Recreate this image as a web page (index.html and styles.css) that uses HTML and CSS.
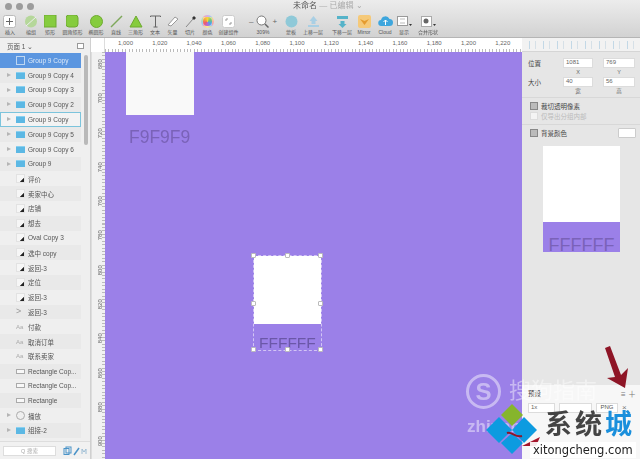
FILE: index.html
```html
<!DOCTYPE html>
<html lang="zh">
<head>
  <meta charset="UTF-8" />
  <title>未命名 — 已编辑</title>
  <link rel="stylesheet" href="styles.css">
</head>
<body>
<div class="app">

  <header class="toolbar">
    <div class="titlebar">
      <div class="lights"><span></span><span></span><span></span></div>
      <div class="doc-title">未命名 <span>— 已编辑 ⌄</span></div>
    </div>
    <div class="tools">
      <div class="tool w-insert"><svg width="15" height="13"><rect x=".5" y=".5" width="12" height="12" rx="2" fill="#fff" stroke="#bbb"/><path d="M6.500 3v7M3 6.500h7" stroke="#666"/></svg><label>插入</label></div>
      <div class="tool w-union"><svg width="14" height="13"><circle cx="7" cy="6.500" r="6" fill="#b5d79a"/><path d="M2 11L12 2" stroke="#eee"/></svg><label>编组</label></div>
      <div class="tool w-rect"><svg width="13" height="13"><rect width="12" height="12" fill="#86cc3e" stroke="#6eaa30"/></svg><label>矩形</label></div>
      <div class="tool w-round"><svg width="13" height="13"><rect width="12" height="12" rx="3" fill="#86cc3e" stroke="#6eaa30"/></svg><label>圆角矩形</label></div>
      <div class="tool w-oval"><svg width="13" height="13"><circle cx="6.500" cy="6.500" r="6" fill="#86cc3e" stroke="#6eaa30"/></svg><label>椭圆形</label></div>
      <div class="tool w-line"><svg width="13" height="13"><path d="M1 12L12 1" stroke="#7ea85a" stroke-width="1.500"/></svg><label>直线</label></div>
      <div class="tool w-tri"><svg width="14" height="13"><path d="M7 1l6 11H1z" fill="#86cc3e" stroke="#6eaa30"/></svg><label>三角形</label></div>
      <div class="tool w-text"><svg width="13" height="13"><path d="M1.500 2V1h10v1M6.500 1v11M4.500 12h4" fill="none" stroke="#666"/></svg><label>文本</label></div>
      <div class="tool w-vec"><svg width="13" height="13"><path d="M2 10L9 2l3 2-7 7z" fill="#fff" stroke="#999"/></svg><label>矢量</label></div>
      <div class="tool w-slice"><svg width="13" height="13"><path d="M2 12L9 4" stroke="#888"/><path d="M8 3l2-2 2 2-2 2z" fill="#333"/></svg><label>切片</label></div>
      <div class="tool w-color"><div class="wheel"></div><label>颜色</label></div>
      <div class="tool w-comp"><svg width="13" height="13"><rect x=".5" y=".5" width="12" height="12" rx="2" fill="#fff" stroke="#ccc"/><path d="M4 4h2M7 9h2M9 7v2M4 4v2" stroke="#999"/></svg><label>创建组件</label></div>
      <div class="tool w-zoom"><div class="zoom-row"><span>–</span><svg width="13" height="13"><circle cx="5.500" cy="5.500" r="4.500" fill="#fff" stroke="#777"/><path d="M9 9l3.500 3.500" stroke="#666" stroke-width="1.500"/></svg><span>+</span></div><label>309%</label></div>
      <div class="tool w-a"><svg width="13" height="13"><circle cx="6.500" cy="6.500" r="6" fill="#8fc9d8"/></svg><label>蒙板</label></div>
      <div class="tool w-b"><svg width="13" height="13"><path d="M6.500 1l4 5H8.500v3h-4V6h-2zM1 10h11v2H1z" fill="#a9cfe4"/></svg><label>上移一层</label></div>
      <div class="tool w-c"><svg width="13" height="13"><path d="M1 1h11v3H1zM4.500 6h4v3h2l-4 4-4-4h2z" fill="#55b3c9"/></svg><label>下移一层</label></div>
      <div class="tool w-d"><svg width="13" height="13"><rect width="13" height="13" rx="2" fill="#f5c979"/><path d="M2 4l4.500 6L11 4l-4.500 2z" fill="#e59b2e"/></svg><label>Mirror</label></div>
      <div class="tool w-e"><svg width="15" height="13"><path d="M3.500 11a3 3 0 0 1-.5-6 4.500 4.500 0 0 1 8.500-1 3.500 3.500 0 0 1 0 7z" fill="#3ea6dd"/><path d="M7.500 5v5M5.500 7l2-2 2 2" fill="none" stroke="#fff"/></svg><label>Cloud</label></div>
      <div class="tool w-f"><svg width="15" height="13"><rect x=".5" y="1.500" width="10" height="9" fill="#fff" stroke="#999"/><path d="M3 4h5M3 8h5" stroke="#bbb"/><path d="M12 9h3l-1.500 2z" fill="#333"/></svg><label>显示</label></div>
      <div class="tool w-g"><svg width="15" height="13"><rect x=".5" y="1.500" width="10" height="10" fill="#fff" stroke="#aaa"/><circle cx="5" cy="6" r="2.500" fill="#666"/><path d="M12 9h3l-1.500 2z" fill="#333"/></svg><label>合并形状</label></div>
    </div>
  </header>

  <div class="main">
    <aside class="layers">
      <div class="page-head"><span>页面 1 ⌄</span><i class="page-btn"></i></div>
      <div class="layer-wrap">
        <ul class="layer-list">
          <li class="row selected"><i class="ic-artboard"></i>Group 9 Copy</li>
          <li class="row alt"><b class="tri"></b><i class="ic-folder"></i>Group 9 Copy 4</li>
          <li class="row"><b class="tri"></b><i class="ic-folder"></i>Group 9 Copy 3</li>
          <li class="row alt"><b class="tri"></b><i class="ic-folder"></i>Group 9 Copy 2</li>
          <li class="row hovered"><b class="tri"></b><i class="ic-folder"></i>Group 9 Copy</li>
          <li class="row alt"><b class="tri"></b><i class="ic-folder"></i>Group 9 Copy 5</li>
          <li class="row"><b class="tri"></b><i class="ic-folder"></i>Group 9 Copy 6</li>
          <li class="row alt"><b class="tri"></b><i class="ic-folder"></i>Group 9</li>
          <li class="row"><i class="ic-shape"></i>评价</li>
          <li class="row alt"><i class="ic-shape"></i>卖家中心</li>
          <li class="row"><i class="ic-shape"></i>店铺</li>
          <li class="row alt"><i class="ic-shape"></i>想去</li>
          <li class="row"><i class="ic-shape"></i>Oval Copy 3</li>
          <li class="row alt"><i class="ic-shape"></i>选中 copy</li>
          <li class="row"><i class="ic-shape"></i>返回-3</li>
          <li class="row alt"><i class="ic-shape"></i>定位</li>
          <li class="row"><i class="ic-shape"></i>返回-3</li>
          <li class="row alt"><i class="ic-chevron">&gt;</i>返回-3</li>
          <li class="row"><i class="ic-aa">Aa</i>付款</li>
          <li class="row alt"><i class="ic-aa">Aa</i>取消订单</li>
          <li class="row"><i class="ic-aa">Aa</i>联系卖家</li>
          <li class="row alt"><i class="ic-rect"></i>Rectangle Cop...</li>
          <li class="row"><i class="ic-rect"></i>Rectangle Cop...</li>
          <li class="row alt"><i class="ic-rect"></i>Rectangle</li>
          <li class="row"><b class="tri"></b><i class="ic-circle"></i>播放</li>
          <li class="row alt"><b class="tri"></b><i class="ic-folder"></i>组接-2</li>
        </ul>
        <div class="scrollbar"></div>
      </div>
      <div class="search-bar">
        <div class="search">Q 搜索</div>
        <svg width="26" height="10"><rect x="1" y="2.500" width="5" height="6" fill="none" stroke="#4a93c8"/><rect x="3" y="1" width="5" height="6" fill="none" stroke="#4a93c8"/><path d="M11 9l5-7" stroke="#4a93c8" stroke-width="1.500"/><path d="M19 8V3l2 3 2-3v5" fill="none" stroke="#9bbcd4"/></svg>
      </div>
    </aside>

    <div class="stage">
      <div class="ruler-h">
        <div class="ruler-corner"></div>
        <div class="ruler-h-labels">
          <span>1,000</span><span>1,020</span><span>1,040</span><span>1,060</span><span>1,080</span><span>1,100</span><span>1,120</span><span>1,140</span><span>1,160</span><span>1,180</span><span>1,200</span><span>1,220</span>
        </div>
      </div>
      <div class="stage-body">
        <div class="ruler-v">
          <span>680</span><span>700</span><span>720</span><span>740</span><span>760</span><span>780</span><span>800</span><span>820</span><span>840</span><span>860</span><span>880</span><span>900</span>
        </div>
        <div class="canvas">
          <div class="swatch swatch-top"></div>
          <div class="swatch-label label-top">F9F9F9</div>
          <div class="selection">
            <div class="swatch-white"></div>
            <div class="swatch-label label-sel">FFFFFF</div>
            <i class="h h1"></i><i class="h h2"></i><i class="h h3"></i><i class="h h4"></i><i class="h h5"></i><i class="h h6"></i><i class="h h7"></i><i class="h h8"></i>
          </div>
        </div>
      </div>
    </div>

    <aside class="inspector">
      <div class="align-bar">
        <i></i><i></i><i></i><i></i><i></i><i></i><i></i><i></i>
      </div>
      <div class="panel-body">
        <div class="prop-grid">
          <label>位置</label><div class="field">1081</div><div class="field">769</div>
          <span></span><small>X</small><small>Y</small>
          <label>大小</label><div class="field">40</div><div class="field">56</div>
          <span></span><small>宽</small><small>高</small>
        </div>
        <div class="check-group">
          <div class="check on">裁切透明像素</div>
          <div class="check off">仅导出分组内部</div>
        </div>
        <div class="bg-row">
          <div class="check on">背景颜色</div>
          <div class="color-chip"></div>
        </div>
        <div class="preview">
          <div class="preview-white"></div>
          <div class="preview-purple">FFFFFF</div>
        </div>
      </div>
      <div class="export">
        <div class="export-head"><span>预设</span><em>≡ ＋</em></div>
        <div class="export-row"><div class="field">1x</div><div class="field"></div><div class="field png">PNG</div><em>×</em></div>
      </div>
    </aside>
  </div>

  <!-- watermarks pasted over the screenshot -->
  <div class="wm-sogou">
    <div class="wm-s">S</div>
    <div class="wm-cn">搜狗指南</div>
    <div class="wm-en">zhinan</div>
  </div>
  <svg class="arrow-red" width="34" height="50" viewBox="0 0 34 50"><path d="M6 5l5-2 11 29 7-7-3 20-18-10 8-1z" fill="#8e1526"/></svg>
  <div class="wm-xt">
    <svg class="wm-logo" width="56" height="50" viewBox="0 0 56 50">
      <path d="M26 0l11 11-11 11-11-11z" fill="#86b52c"/>
      <path d="M13 13l13 13-13 13L0 26z" fill="#0d9be0"/>
      <path d="M38 13l13 13-13 13-12-13z" fill="#0d9be0"/>
      <path d="M26 29l11 10-11 11-11-11z" fill="#0d9be0"/>
      <path d="M21 29c5-2 8 5 15 3" fill="none" stroke="#8e1526" stroke-width="2"/>
      <path d="M36 42l18-9-4 9z" fill="#a5142a"/>
    </svg>
    <div class="wm-name">系统<span>城</span></div>
    <div class="wm-url">xitongcheng.com</div>
  </div>
</div>
</body>
</html>
```
FILE: styles.css
```css
* {
  box-sizing: border-box;
}

html, body {
  margin: 0;
  padding: 0;
  width: 640px;
  height: 459px;
  overflow: hidden;
}

body {
  font-family: "Liberation Sans", "Noto Sans CJK SC", sans-serif;
  color: #444;
  background: #e6e6e6;
}

.app {
  position: relative;
  width: 640px;
  height: 459px;
  display: flex;
  flex-direction: column;
  overflow: hidden;
  filter: blur(0.35px);
}

/* toolbar */
.toolbar {
  height: 38px;
  flex: none;
  background: linear-gradient(#ececec, #d2d2d2);
  border-bottom: 1px solid #b5b5b5;
}

.titlebar {
  height: 15px;
  position: relative;
}

.lights {
  display: flex;
  gap: 4px;
  padding: 3px 0 0 5px;
}
.lights span {
  width: 7px;
  height: 7px;
  border-radius: 50%;
  background: #9c9c9c;
}

.doc-title {
  position: absolute;
  left: 293px;
  top: 1px;
  font-size: 8px;
  line-height: 10px;
  color: #555;
}
.doc-title span {
  color: #aaa;
}

.tools {
  display: flex;
  align-items: flex-start;
  height: 22px;
  padding-left: 3px;
}

.tool {
  flex: none;
  display: flex;
  flex-direction: column;
  align-items: center;
  height: 22px;
}
.tool svg {
  display: block;
}
.tool label {
  font-size: 5px;
  line-height: 8px;
  margin-top: 0;
  color: #555;
  white-space: nowrap;
}

.w-insert { width: 19px; align-items: flex-start; }
.w-insert label { margin-left: 2px; }
.w-union { width: 18px; }
.w-rect { width: 20px; }
.w-round { width: 25px; }
.w-oval { width: 22px; }
.w-line { width: 18px; }
.w-tri { width: 21px; }
.w-text { width: 18px; }
.w-vec { width: 17px; }
.w-slice { width: 18px; }
.w-color { width: 17px; }
.w-comp { width: 25px; }
.w-zoom { width: 44px; }
.w-a { width: 12px; }
.w-b { width: 32px; }
.w-c { width: 26px; }
.w-d { width: 18px; }
.w-e { width: 24px; }
.w-f { width: 14px; }
.w-g { width: 34px; }

.wheel {
  width: 13px;
  height: 13px;
  border-radius: 50%;
  background: conic-gradient(#f5d33c, #7bc96a, #4aa5e8, #b06ad8, #ec5a6e, #f5a03c, #f5d33c);
  border: 2px solid rgba(255, 255, 255, 0.45);
}

.zoom-row {
  display: flex;
  align-items: center;
  gap: 3px;
  height: 13px;
  font-size: 8px;
  color: #666;
}

/* main area */
.main {
  flex: 1;
  display: flex;
  min-height: 0;
}

.layers {
  width: 91px;
  flex: none;
  display: flex;
  flex-direction: column;
  background: #efefef;
  border-right: 1px solid #d0d0d0;
}

.page-head {
  height: 15px;
  flex: none;
  display: flex;
  justify-content: space-between;
  align-items: center;
  padding: 0 6px 0 7px;
  font-size: 6.500px;
  color: #555;
}
.page-btn {
  width: 7px;
  height: 6px;
  border: 1px solid #999;
  background: #fff;
}

.layer-wrap {
  flex: 1;
  position: relative;
  min-height: 0;
  overflow: hidden;
}

.layer-list {
  list-style: none;
  margin: 0;
  padding: 0;
}

.row {
  height: 14.800px;
  display: flex;
  align-items: center;
  padding-left: 16px;
  margin-right: 9px;
  position: relative;
  font-size: 6.500px;
  color: #555;
  white-space: nowrap;
}
.row.alt {
  background: #e9e9e9;
}
.row.selected {
  background: #5b96e0;
  color: #dce9f8;
}
.row.hovered {
  outline: 1px solid #7cc4dc;
  outline-offset: -1px;
  background: #f3f3f3;
}
.tri {
  position: absolute;
  left: 7px;
  top: 5px;
  border-left: 4px solid #b5b5b5;
  border-top: 2.500px solid transparent;
  border-bottom: 2.500px solid transparent;
}

.row i {
  flex: none;
  display: block;
  margin-right: 3px;
  font-style: normal;
}
.ic-folder {
  width: 9px;
  height: 7px;
  background: #5cb8e4;
  border-top: 1px solid #8ad0f0;
}
.ic-artboard {
  width: 9px;
  height: 9px;
  border: 1px solid #bcd6f2;
}
.ic-shape {
  width: 9px;
  height: 9px;
  border: 1px solid #e2e2e2;
  background: linear-gradient(135deg, #f6f6f6 70%, #222 72%);
}
.ic-chevron {
  width: 9px;
  font-size: 9px;
  line-height: 9px;
  color: #999;
}
.ic-aa {
  width: 9px;
  font-size: 6px;
  color: #aaa;
}
.ic-rect {
  width: 9px;
  height: 5px;
  border: 1px solid #aaa;
  background: #f8f8f8;
}
.ic-circle {
  width: 9px;
  height: 9px;
  border-radius: 50%;
  border: 1px solid #aaa;
}

.scrollbar {
  position: absolute;
  right: 2px;
  top: 2px;
  width: 4px;
  height: 90px;
  border-radius: 2px;
  background: #b9b9b9;
}

.search-bar {
  height: 18px;
  flex: none;
  display: flex;
  align-items: center;
  gap: 7px;
  padding-left: 3px;
  background: #f1f1f1;
  border-top: 1px solid #ddd;
}
.search {
  width: 53px;
  height: 10px;
  background: #fff;
  border: 1px solid #ddd;
  font-size: 5.500px;
  line-height: 8px;
  text-align: center;
  color: #aaa;
}

/* canvas and rulers */
.stage {
  flex: 1;
  display: flex;
  flex-direction: column;
  min-width: 0;
}

.ruler-h {
  height: 14px;
  flex: none;
  display: flex;
  background:
    repeating-linear-gradient(90deg, #bbb 0 1px, transparent 1px 3.430px) 0 100% / 100% 3px no-repeat,
    #fff;
}
.ruler-corner {
  width: 14px;
  flex: none;
  background: #fff;
  border-right: 1px solid #ddd;
}
.ruler-h-labels {
  display: flex;
  padding-left: 13px;
}
.ruler-h-labels span {
  width: 34.300px;
  flex: none;
  font-size: 6px;
  line-height: 10px;
  color: #666;
}

.stage-body {
  flex: 1;
  display: flex;
  min-height: 0;
}

.ruler-v {
  width: 14px;
  flex: none;
  display: flex;
  flex-direction: column;
  background:
    repeating-linear-gradient(180deg, #bbb 0 1px, transparent 1px 3.430px) 100% 0 / 3px 100% no-repeat,
    #f1f1f1;
  border-left: 1px solid #ddd;
  overflow: hidden;
}
.ruler-v span {
  height: 34.300px;
  flex: none;
  display: flex;
  align-items: center;
  justify-content: center;
  padding-right: 3px;
  writing-mode: vertical-rl;
  transform: rotate(180deg);
  font-size: 6px;
  color: #666;
}
.ruler-v span:first-child {
  margin-top: -5px;
}

.canvas {
  flex: 1;
  position: relative;
  background: #9b80e8;
  overflow: hidden;
}

.swatch-top {
  position: absolute;
  left: 21px;
  top: 0;
  width: 68px;
  height: 63px;
  background: #f9f9f9;
}

.swatch-label {
  position: absolute;
  color: #7a62b8;
  font-size: 17.500px;
  line-height: 20px;
  white-space: nowrap;
}
.label-top {
  left: 24px;
  top: 75px;
}

.selection {
  position: absolute;
  left: 148px;
  top: 203px;
  width: 69px;
  height: 96px;
  border: 1px dashed rgba(255, 255, 255, 0.55);
}
.swatch-white {
  height: 68px;
  background: #fff;
}
.label-sel {
  left: 5px;
  top: 77px;
  font-size: 15.500px;
  color: #6b57a8;
}

.h {
  position: absolute;
  width: 5px;
  height: 5px;
  margin: -3px 0 0 -3px;
  background: #fff;
  border: 1px solid #bbb;
  border-radius: 1px;
}
.h1 { left: 0; top: 0; }
.h2 { left: 50%; top: 0; }
.h3 { left: 100%; top: 0; }
.h4 { left: 0; top: 48px; }
.h5 { left: 100%; top: 48px; }
.h6 { left: 0; top: 100%; }
.h7 { left: 50%; top: 100%; }
.h8 { left: 100%; top: 100%; }

/* right panel */
.inspector {
  width: 118px;
  flex: none;
  display: flex;
  flex-direction: column;
  background: #e6e6e6;
}

.align-bar {
  height: 14px;
  flex: none;
  display: flex;
  gap: 7px;
  align-items: center;
  padding-left: 7px;
  background: #f2f2f2;
  border-bottom: 1px solid #d5d5d5;
}
.align-bar i {
  width: 7px;
  height: 8px;
  border-left: 1px solid #c3d8e6;
  border-right: 1px solid #d6e0e7;
}

.panel-body {
  flex: 1;
  padding: 6px 0 0;
  min-height: 0;
}

.prop-grid {
  display: grid;
  grid-template-columns: 25px 30px 32px;
  column-gap: 10px;
  padding: 0 0 0 6px;
  font-size: 6.500px;
  align-items: center;
}
.prop-grid label {
  color: #444;
}
.prop-grid small {
  font-size: 5.500px;
  line-height: 9px;
  text-align: center;
  color: #666;
}
.field {
  height: 9.500px;
  background: #fff;
  border: 1px solid #dcdcdc;
  font-size: 6px;
  line-height: 7.500px;
  padding-left: 2px;
  color: #666;
}

.check-group {
  margin-top: 1px;
  padding: 4px 0 4px 8px;
  display: flex;
  flex-direction: column;
  gap: 3.500px;
  border-top: 1px solid #d8d8d8;
  border-bottom: 1px solid #d8d8d8;
}

.check {
  display: flex;
  align-items: center;
  height: 7px;
  font-size: 6.500px;
  color: #444;
  white-space: nowrap;
}
.check::before {
  content: "";
  width: 6px;
  height: 6px;
  margin-right: 3px;
  border: 1px solid #888;
  background: #bbb;
}
.check.off {
  color: #bbb;
}
.check.off::before {
  border-color: #ddd;
  background: #f4f4f4;
}

.bg-row {
  display: flex;
  justify-content: space-between;
  align-items: center;
  padding: 3px 4px 0 8px;
  height: 14px;
}
.color-chip {
  width: 18px;
  height: 10px;
  background: #fff;
  border: 1px solid #ccc;
  border-radius: 1px;
}

.preview {
  width: 77px;
  margin: 7px 0 0 21px;
}
.preview-white {
  height: 76px;
  background: #fff;
}
.preview-purple {
  height: 30px;
  background: #9b80e8;
  color: #7a62b8;
  font-size: 18px;
  line-height: 46px;
  text-align: center;
  overflow: hidden;
}

.export {
  height: 74px;
  flex: none;
  padding: 2px 4px 0 6px;
  background: #f7f7f7;
  font-size: 6.500px;
}
.export-head {
  display: flex;
  justify-content: space-between;
  height: 12px;
  align-items: center;
}
.export em {
  font-style: normal;
  color: #777;
  font-size: 8px;
}
.export-row {
  display: grid;
  grid-template-columns: 27px 33px 22px 8px;
  gap: 4px;
  align-items: center;
  margin-top: 4px;
}
.png {
  text-align: center;
  color: #555;
  padding: 0;
}

/* watermarks */
.wm-sogou {
  position: absolute;
  left: 466px;
  top: 374px;
  width: 130px;
  height: 60px;
  color: rgba(255, 255, 255, 0.45);
}
.wm-s {
  position: absolute;
  left: 0;
  top: 0;
  width: 35px;
  height: 35px;
  border: 3px solid rgba(255, 255, 255, 0.45);
  border-radius: 50%;
  font-size: 24px;
  font-weight: bold;
  line-height: 29px;
  text-align: center;
}
.wm-cn {
  position: absolute;
  left: 43px;
  top: 4px;
  font-size: 22px;
  line-height: 26px;
  white-space: nowrap;
}
.wm-en {
  position: absolute;
  left: 1px;
  top: 43px;
  font-size: 17px;
  line-height: 20px;
  font-weight: bold;
}

.arrow-red {
  position: absolute;
  left: 599px;
  top: 343px;
}

.wm-xt {
  position: absolute;
  left: 486px;
  top: 404px;
  width: 154px;
  height: 55px;
}
.wm-logo {
  position: absolute;
  left: 0;
  top: 0;
}
.wm-name {
  position: absolute;
  left: 59px;
  top: 4px;
  font-size: 27px;
  line-height: 34px;
  font-weight: bold;
  color: #444;
  white-space: nowrap;
  letter-spacing: 3px;
}
.wm-name span {
  color: #1a8fdc;
}
.wm-url {
  position: absolute;
  left: 44px;
  top: 38px;
  padding: 0 3px;
  font-family: "DejaVu Sans", sans-serif;
  font-size: 11.500px;
  line-height: 16px;
  color: #222;
  background: rgba(255, 255, 255, 0.9);
  white-space: nowrap;
}
```
